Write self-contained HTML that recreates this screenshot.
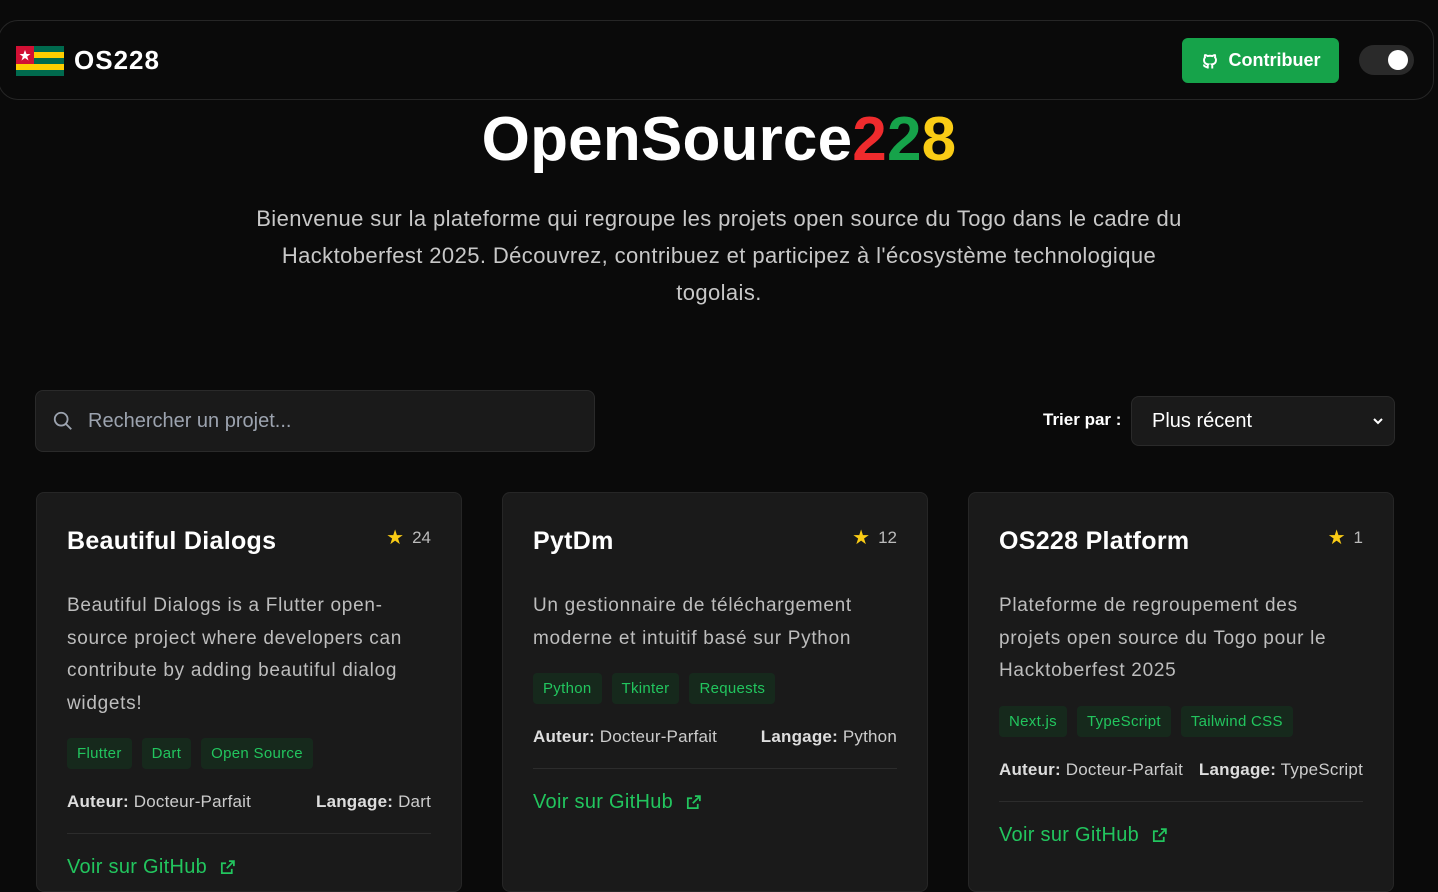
<!DOCTYPE html>
<html><head><meta charset="utf-8"><style>
*{box-sizing:border-box;margin:0;padding:0}
body{width:1438px;height:869px;overflow:hidden;background:#0a0a0a;font-family:"Liberation Sans",sans-serif;color:#fff;position:relative}
.hdr{position:absolute;left:-2px;top:20px;width:1436px;height:80px;border:1px solid #262626;border-radius:20px;background:#0a0a0a}
.logo{position:absolute;left:16px;top:45px;display:flex;align-items:center}
.logo span{font-weight:bold;font-size:26px;margin-left:10px;letter-spacing:1px}
.btn{position:absolute;left:1182px;top:38px;width:157px;height:45px;background:#16a34a;border-radius:6px;display:flex;align-items:center;justify-content:center;font-weight:bold;font-size:18px}
.tog{position:absolute;left:1359px;top:45px;width:55px;height:30px;border-radius:15px;background:#2a2a2a}
.tog i{position:absolute;right:6px;top:5px;width:20px;height:20px;border-radius:50%;background:#fff}
h1{position:absolute;top:104px;width:100%;text-align:center;font-size:62px;font-weight:bold;letter-spacing:0.2px}
.intro{position:absolute;top:200px;left:244px;width:950px;text-align:center;font-size:22px;line-height:37px;color:#c8c8c8;letter-spacing:0.4px}
.search{position:absolute;left:35px;top:390px;width:560px;height:62px;background:#1a1a1a;border:1px solid #2a2a2a;border-radius:8px;color:#9ca3af;font-size:20px;display:flex;align-items:center;padding-left:16px}
.sortl{position:absolute;left:1043px;top:410px;font-size:17px;font-weight:bold}
.sel{position:absolute;left:1131px;top:396px;width:264px;height:50px;background:#1a1a1a;border:1px solid #2a2a2a;border-radius:8px;font-size:20px;padding:13px 20px}
.card{position:absolute;top:492px;width:426px;height:400px;background:#1a1a1a;border:1px solid #262626;border-radius:8px;padding:30px}
.card h2{font-size:25px;font-weight:bold;margin-top:4px;letter-spacing:0.3px}
.star{position:absolute;right:30px;top:32px;font-size:17px;color:#bbb;display:flex;align-items:center;gap:8px}
.desc{margin-top:34px;font-size:19px;line-height:32.5px;color:#bdbdbd;letter-spacing:0.7px}
.tags{margin-top:18px;display:flex;gap:10px}
.tags span{background:#16291c;color:#22c55e;font-size:15px;padding:7px 10px;border-radius:4px;letter-spacing:0.3px}
.meta{margin-top:23px;display:flex;justify-content:space-between;font-size:17px;color:#ccc;letter-spacing:0.2px}
.meta b{color:#ddd}
.hr{margin-top:21px;border-top:1px solid #2c2c2c}
.gh{margin-top:22px;color:#22c55e;font-size:20px;display:flex;align-items:center;gap:12px;letter-spacing:0.3px}
</style></head><body>
<div class="hdr"></div>
<div class="logo"><svg width="48" height="30" viewBox="0 0 48 30"><rect width="48" height="30" fill="#006a4e"/><rect y="6" width="48" height="6" fill="#ffce00"/><rect y="18" width="48" height="6" fill="#ffce00"/><rect width="18" height="18" fill="#d21034"/><polygon points="9,4 10.5,8 14.5,8 11.2,10.5 12.5,14.5 9,12 5.5,14.5 6.8,10.5 3.5,8 7.5,8" fill="#fff"/></svg><span>OS228</span></div>
<div class="btn"><svg width="18" height="18" viewBox="0 0 24 24" fill="none" stroke="#fff" stroke-width="2.6" style="margin-right:10px"><path d="M9 20c-4 1-4-2-6-2.5M15 22v-3.5c0-1 .1-1.4-.5-2 2.8-.3 5.5-1.4 5.5-6a4.6 4.6 0 0 0-1.3-3.2 4.2 4.2 0 0 0-.1-3.2s-1.1-.3-3.5 1.3a12 12 0 0 0-6.2 0C6.5 3.8 5.4 4.1 5.4 4.1a4.2 4.2 0 0 0-.1 3.2A4.6 4.6 0 0 0 4 10.5c0 4.6 2.7 5.7 5.5 6-.6.6-.6 1.2-.5 2V22"/></svg>Contribuer</div>
<div class="tog"><i></i></div>
<h1>OpenSource<span style="color:#ef2b2d">2</span><span style="color:#16a34a">2</span><span style="color:#facc15">8</span></h1>
<div class="intro">Bienvenue sur la plateforme qui regroupe les projets open source du Togo dans le cadre du Hacktoberfest 2025. Découvrez, contribuez et participez à l'écosystème technologique togolais.</div>
<div class="search"><svg width="22" height="22" viewBox="0 0 24 24" fill="none" stroke="#9ca3af" stroke-width="2" style="margin-right:14px"><circle cx="10" cy="10" r="7"/><path d="M15 15l6 6"/></svg>Rechercher un projet...</div>
<div class="sortl">Trier par :</div>
<div class="sel">Plus récent<svg style="position:absolute;right:10px;top:19px" width="12" height="10" viewBox="0 0 12 10" fill="none" stroke="#fff" stroke-width="2"><path d="M2 3l4 4 4-4"/></svg></div>

<div class="card" style="left:36px"><h2>Beautiful Dialogs</h2><div class="star"><span style="color:#facc15;font-size:20px">★</span>24</div>
<div class="desc">Beautiful Dialogs is a Flutter open-source project where developers can contribute by adding beautiful dialog widgets!</div>
<div class="tags"><span>Flutter</span><span>Dart</span><span>Open Source</span></div>
<div class="meta"><div><b>Auteur:</b> Docteur-Parfait</div><div><b>Langage:</b> Dart</div></div><div class="hr"></div>
<div class="gh">Voir sur GitHub <svg width="17" height="17" viewBox="0 0 24 24" fill="none" stroke="#22c55e" stroke-width="2.5"><path d="M14 3h7v7M21 3l-10 10M18 14v6H4V6h6"/></svg></div></div>

<div class="card" style="left:502px"><h2>PytDm</h2><div class="star"><span style="color:#facc15;font-size:20px">★</span>12</div>
<div class="desc">Un gestionnaire de téléchargement moderne et intuitif basé sur Python</div>
<div class="tags"><span>Python</span><span>Tkinter</span><span>Requests</span></div>
<div class="meta"><div><b>Auteur:</b> Docteur-Parfait</div><div><b>Langage:</b> Python</div></div><div class="hr"></div>
<div class="gh">Voir sur GitHub <svg width="17" height="17" viewBox="0 0 24 24" fill="none" stroke="#22c55e" stroke-width="2.5"><path d="M14 3h7v7M21 3l-10 10M18 14v6H4V6h6"/></svg></div></div>

<div class="card" style="left:968px"><h2>OS228 Platform</h2><div class="star"><span style="color:#facc15;font-size:20px">★</span>1</div>
<div class="desc">Plateforme de regroupement des projets open source du Togo pour le Hacktoberfest 2025</div>
<div class="tags"><span>Next.js</span><span>TypeScript</span><span>Tailwind CSS</span></div>
<div class="meta"><div><b>Auteur:</b> Docteur-Parfait</div><div><b>Langage:</b> TypeScript</div></div><div class="hr"></div>
<div class="gh">Voir sur GitHub <svg width="17" height="17" viewBox="0 0 24 24" fill="none" stroke="#22c55e" stroke-width="2.5"><path d="M14 3h7v7M21 3l-10 10M18 14v6H4V6h6"/></svg></div></div>
</body></html>
